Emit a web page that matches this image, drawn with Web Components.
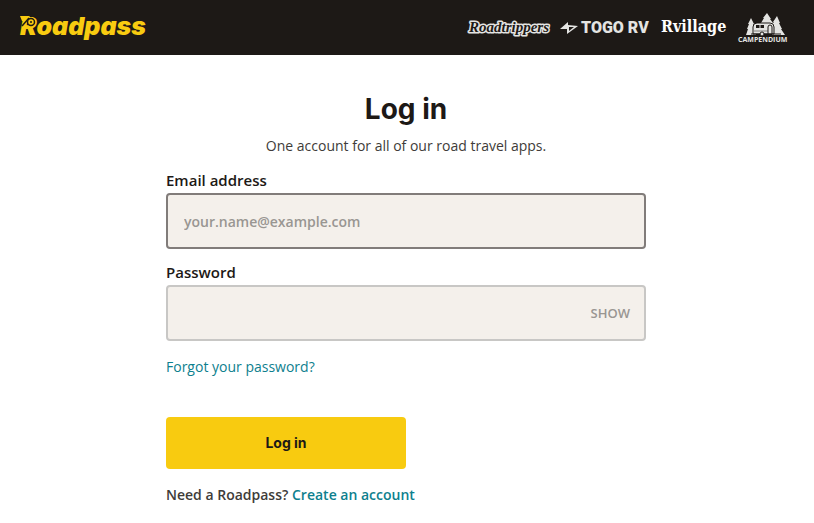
<!DOCTYPE html>
<html lang="en">
<head>
<meta charset="utf-8">
<meta name="viewport" content="width=device-width, initial-scale=1">
<title>Log in - Roadpass</title>
<style>
  body {
    margin: 0;
    background: #fff;
    color: #1d1916;
    font: 14px/20px "Open Sans", "Noto Sans", sans-serif;
  }
</style>
</head>
<body>
<rp-header></rp-header>
<rp-login-form>
  <span slot="title">Log in</span>
  <span slot="intro">One account for all of our road travel apps.</span>
</rp-login-form>

<script>
class RpHeader extends HTMLElement {
  constructor() {
    super();
    this.attachShadow({ mode: "open" });

    this.shadowRoot.innerHTML = `
      <style>
        :host {
          display: block;
          background: #1d1916;
        }
        header {
          display: flex;
          align-items: center;
          justify-content: space-between;
          height: 55px;
          padding: 0 24px 0 20px;
        }
        nav {
          display: flex;
          align-items: center;
          gap: 13px;
        }
        a {
          display: block;
          color: #e4e4e2;
          text-decoration: none;
        }
        svg {
          display: block;
          overflow: visible;
        }
        .roadpass { font: italic 900 25px Inter, sans-serif; }
        .trippers { font: italic bold 15px "Liberation Serif", serif; }
        .togo { font: 900 16px Roboto, sans-serif; }
        .village { font: bold 16px "DejaVu Serif Condensed", "DejaVu Serif", serif; }
        .campendium { font: 700 7px "Open Sans", sans-serif; }
      </style>
      <header>
        <a href="#roadpass" aria-label="Roadpass">
          <svg width="126" height="55" viewBox="0 0 126 55">
            <text class="roadpass" x="0" y="35" fill="#f8cb10">Roadpass</text>
            <path d="M0 16h10l-4 5H2z" fill="#f8cb10"/>
            <path d="M2 26l7-8" stroke="#1d1916" stroke-width="1.500"/>
            <circle cx="11" cy="22" r="3.500" fill="#f8cb10" stroke="#1d1916" stroke-width="1.500"/>
            <circle cx="11" cy="22" r="1" fill="#1d1916"/>
          </svg>
        </a>
        <nav aria-label="Roadpass apps">
          <a href="#roadtrippers" aria-label="Roadtrippers">
            <svg width="79" height="55" viewBox="0 0 79 55">
              <text class="trippers" x="1" y="32" fill="#1d1916" stroke="#e4e4e2" stroke-width="3" stroke-linejoin="round" paint-order="stroke">Roadtrippers</text>
            </svg>
          </a>
          <a href="#togo" aria-label="Togo RV">
            <svg width="88" height="55" viewBox="0 0 88 55">
              <path d="M0 29L8 22 8 25 18 26 7 34 7 29z" fill="#e4e4e2"/>
              <path d="M9 27l5 0-5 4z" fill="#1d1916"/>
              <text class="togo" x="21" y="33" fill="#e4e4e2">TOGO RV</text>
            </svg>
          </a>
          <a href="#rvillage" aria-label="Rvillage">
            <svg width="64" height="55" viewBox="0 0 64 55">
              <text class="village" x="0" y="32" fill="#fff">Rvillage</text>
            </svg>
          </a>
          <a href="#campendium" aria-label="Campendium">
            <svg width="52" height="55" viewBox="0 0 52 55">
              <g fill="#e4e4e2">
                <path d="M8 35l2-6H9l2-5h-1l3-6 3 6h-1l3 5v6z"/>
                <path d="M23 23l3-5h-1l4-5 4 6h-1l3 4v3H23z"/>
                <path d="M34 35V24l2-2h-1l4-6 3 7h-1l3 6h-1l4 6z"/>
              </g>
              <path d="M15 34v-7q0-4 4-4h13q4 0 4 4v7z" fill="#e4e4e2" stroke="#1d1916"/>
              <path d="M18 25h8v3h-8z" fill="#1d1916"/>
              <path d="M22 25v3" stroke="#e4e4e2"/>
              <path d="M30 34v-7q0-2 2-2t2 2v7" fill="none" stroke="#1d1916"/>
              <path d="M16 31h14" stroke="#1d1916" stroke-width=".5"/>
              <path d="M13 34h30" stroke="#1d1916"/>
              <circle cx="24" cy="34" r="2" fill="#e4e4e2" stroke="#1d1916"/>
              <text class="campendium" x="0" y="42" fill="#e4e4e2">CAMPENDIUM</text>
            </svg>
          </a>
        </nav>
      </header>
    `;
  }
}

class RpField extends HTMLElement {
  constructor() {
    super();
    this.attachShadow({ mode: "open" });

    this.shadowRoot.innerHTML = `
      <style>
        :host {
          display: block;
          --field-border: #c8c7c5;
        }
        :host([active]) { --field-border: #817c7a; }
        label {
          display: block;
          font-size: 15px;
          font-weight: 600;
          line-height: 20px;
          margin-bottom: 3px;
        }
        .box {
          display: flex;
          align-items: center;
          height: 52px;
          border: 2px solid var(--field-border);
          border-radius: 4px;
          background: #f4f0eb;
        }
        input {
          flex: 1;
          min-width: 0;
          height: 100%;
          box-sizing: border-box;
          padding: 0 16px;
          border: 0;
          outline: 0;
          background: none;
          color: #1d1916;
          font: 600 14px "Open Sans", sans-serif;
        }
        input::placeholder {
          color: #999692;
          opacity: 1;
        }
      </style>
      <label for="input"></label>
      <div class="box">
        <input id="input">
        <slot></slot>
      </div>
    `;

    this.input = this.shadowRoot.querySelector("input");
  }

  connectedCallback() {
    this.shadowRoot.querySelector("label").textContent =
      this.getAttribute("label");
    this.input.type = this.getAttribute("type") || "text";
    this.input.placeholder = this.getAttribute("placeholder") || "";
  }

  // Switch between hidden and readable password text
  toggleVisible() {
    this.input.type = this.input.type === "password" ? "text" : "password";
    return this.input.type === "text";
  }
}

class RpLoginForm extends HTMLElement {
  constructor() {
    super();
    this.attachShadow({ mode: "open" });

    this.shadowRoot.innerHTML = `
      <style>
        :host {
          display: block;
          padding: 36px 26px 16px 24px;
        }
        main {
          max-width: 480px;
          margin: 0 auto;
        }
        h1 {
          margin: 0;
          font: 700 28px/36px Inter, sans-serif;
          text-align: center;
        }
        p { margin: 0; }
        .intro {
          margin: 9px 0 14px;
          color: #403c39;
          text-align: center;
        }
        .password { margin-top: 13px; }
        a {
          color: #0d808e;
          text-decoration: none;
        }
        .forgot { margin: 16px 0 40px; }
        .show {
          padding: 0 14px;
          border: 0;
          background: none;
          color: #999692;
          font: 600 13px/20px "Open Sans", sans-serif;
          cursor: pointer;
        }
        .submit {
          display: block;
          width: 50%;
          height: 52px;
          padding: 0;
          border: 0;
          border-radius: 4px;
          background: #f8cb10;
          color: #1d1916;
          font: 700 14px/20px Inter, sans-serif;
          cursor: pointer;
        }
        .signup {
          margin-top: 16px;
          color: #403c39;
          font-weight: 600;
        }
      </style>
      <main>
        <h1><slot name="title"></slot></h1>
        <p class="intro"><slot name="intro"></slot></p>
        <form>
          <rp-field label="Email address" type="email" placeholder="your.name@example.com" active></rp-field>
          <rp-field class="password" label="Password" type="password">
            <button class="show" type="button">SHOW</button>
          </rp-field>
          <p class="forgot"><a href="#forgot">Forgot your password?</a></p>
          <button class="submit" type="submit">Log in</button>
        </form>
        <p class="signup">Need a Roadpass? <a href="#signup">Create an account</a></p>
      </main>
    `;

    const password = this.shadowRoot.querySelector(".password");
    const show = this.shadowRoot.querySelector(".show");
    show.addEventListener("click", () => {
      show.textContent = password.toggleVisible() ? "HIDE" : "SHOW";
    });

    this.shadowRoot.querySelector("form").addEventListener("submit", (e) => {
      e.preventDefault();
    });
  }
}

customElements.define("rp-header", RpHeader);
customElements.define("rp-field", RpField);
customElements.define("rp-login-form", RpLoginForm);
</script>
</body>
</html>
